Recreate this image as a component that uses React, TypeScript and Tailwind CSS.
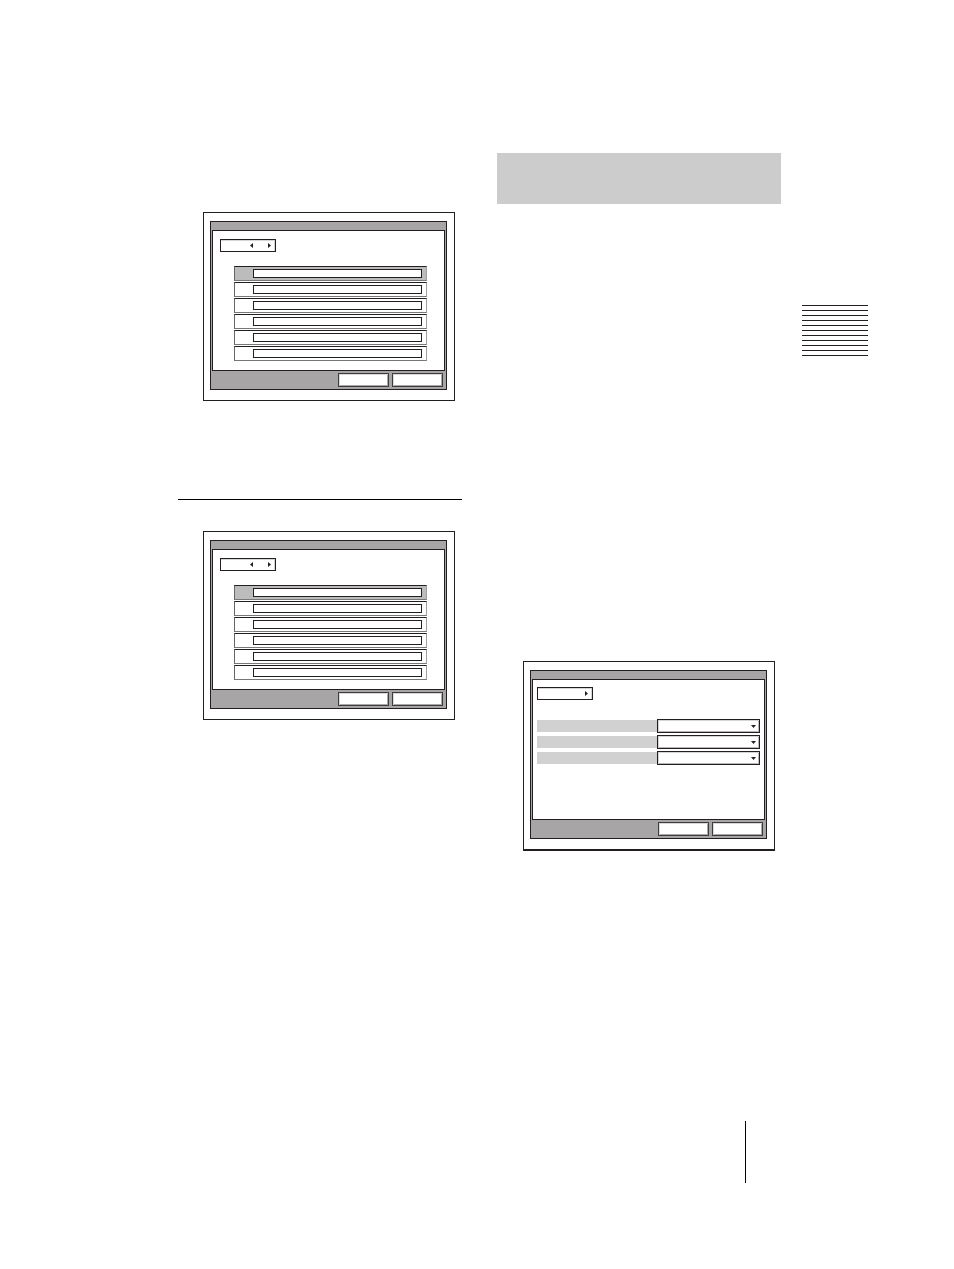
import { useState, type ReactNode } from "react";

interface PageSelectorProps {
    hasPrevious?: boolean;
}

interface ScreenProps {
    className: string;
    children: ReactNode;
}

const PRESETS = [1, 2, 3, 4, 5, 6];
const SETTINGS = [1, 2, 3];
const RULES = [1, 2, 3, 4, 5, 6, 7, 8, 9, 10, 11];

function PageSelector({ hasPrevious = false }: PageSelectorProps) {
    return (
        <div className="flex h-[13px] w-14 items-center justify-end gap-[15px] border border-[#231f20] bg-white pr-1 shadow-[inset_0_1px_0_#d4d4d8,inset_-1px_0_0_#d4d4d8]">
            {hasPrevious && (
                <button type="button" aria-label="Previous page" className="block">
                    <svg className="block h-[5px] w-[3px]" viewBox="0 0 3 5" fill="#231f20">
                        <path d="M3 0v5L0 2.5z" />
                    </svg>
                </button>
            )}
            <button type="button" aria-label="Next page" className="block">
                <svg className="block h-[5px] w-[3px]" viewBox="0 0 3 5" fill="#231f20">
                    <path d="M0 0v5l3-2.5z" />
                </svg>
            </button>
        </div>
    );
}

function FooterButton({ label }: { label: string }) {
    return (
        <button
            type="button"
            aria-label={label}
            className="block h-3.5 w-[51px] border border-[#3f3c3d] bg-white shadow-[inset_1px_1px_0_#d8d8d8,inset_-1px_-1px_0_#a8a8a8]"
        />
    );
}

function Screen({ className, children }: ScreenProps) {
    return (
        <section className={`border border-[#231f20] bg-white pt-2 pr-[7px] pb-2.5 pl-1.5 ${className}`}>
            <div className="border border-[#231f20] bg-[#a7a5a6] px-px">
                <div className="h-2" />
                <div className="h-[141px] border border-[#231f20] bg-white">{children}</div>
                <div className="flex justify-end gap-[3px] pt-0.5 pr-0.5 pb-0.5">
                    <FooterButton label="OK" />
                    <FooterButton label="Cancel" />
                </div>
            </div>
        </section>
    );
}

function PresetScreen({ className }: { className: string }) {
    return (
        <Screen className={className}>
            <div className="pt-2 pl-[7px]">
                <PageSelector hasPrevious />
            </div>
            <ul className="mt-3.5 mr-[17px] ml-[21px] flex flex-col gap-px">
                {PRESETS.map((n) => (
                    <li
                        key={n}
                        className={`flex h-[15px] items-start border border-t-[#231f20] border-r-[#a0a0a0] border-b-[#777777] border-l-[#666666] pt-0.5 pr-1 pl-[18px] ${n === 1 ? "bg-[#bcbcbc]" : "bg-white"}`}
                    >
                        <input
                            type="text"
                            aria-label={`Preset ${n}`}
                            className="block h-[9px] w-full min-w-0 border border-[#231f20] bg-white text-[6px]"
                        />
                    </li>
                ))}
            </ul>
        </Screen>
    );
}

function SettingRow({ id }: { id: string }) {
    const [value, setValue] = useState("");

    return (
        <div className="flex items-center">
            <label htmlFor={id} aria-label={id} className="h-3 flex-1 bg-[#d1d1d1]" />
            <div className="relative w-[103px]">
                <select
                    id={id}
                    value={value}
                    onChange={(e) => setValue(e.target.value)}
                    className="block h-3.5 w-full appearance-none border border-[#231f20] bg-white text-[6px] shadow-[inset_1px_1px_0_#d4d4d4,inset_-1px_-1px_0_#b8b8b8]"
                >
                    <option value="" />
                </select>
                <svg
                    className="pointer-events-none absolute top-1.5 right-1 h-[3px] w-[5px]"
                    viewBox="0 0 5 3"
                    fill="#231f20"
                >
                    <path d="M0 0h5L2.5 3z" />
                </svg>
            </div>
        </div>
    );
}

function SettingScreen({ className }: { className: string }) {
    return (
        <Screen className={className}>
            <div className="px-1 pt-[7px]">
                <PageSelector />
                <div className="mt-[19px] flex flex-col gap-0.5">
                    {SETTINGS.map((n) => (
                        <SettingRow key={n} id={`setting-${n}`} />
                    ))}
                </div>
            </div>
        </Screen>
    );
}

export default function App() {
    return (
        <div className="min-h-screen bg-white pt-[153px] pr-[86px] pb-[86px] pl-[178px] font-['Liberation_Sans',sans-serif]">
            <main className="flex items-start">
                <div className="min-w-0 flex-1 pt-[59px]">
                    <PresetScreen className="mr-[7px] ml-[25px]" />
                    <hr className="mt-[98px] border-black" />
                    <PresetScreen className="mt-[31px] mr-[7px] ml-[25px]" />
                </div>

                <div className="ml-[35px] min-w-0 flex-1">
                    <header className="h-[51px] bg-[#cccccc]" />
                    <SettingScreen className="mt-[457px] mr-1.5 ml-[26px] shadow-[0_1px_0_#231f20]" />
                </div>

                {/* Thumb index */}
                <aside className="mt-[152px] ml-[21px] flex w-[66px] flex-col gap-1">
                    {RULES.map((n) => (
                        <div key={n} className="h-px bg-[#231f20]" />
                    ))}
                </aside>
            </main>

            <footer className="mt-[271px] flex justify-end pr-[122px]">
                <div className="h-[62px] w-px bg-black" />
            </footer>
        </div>
    );
}
